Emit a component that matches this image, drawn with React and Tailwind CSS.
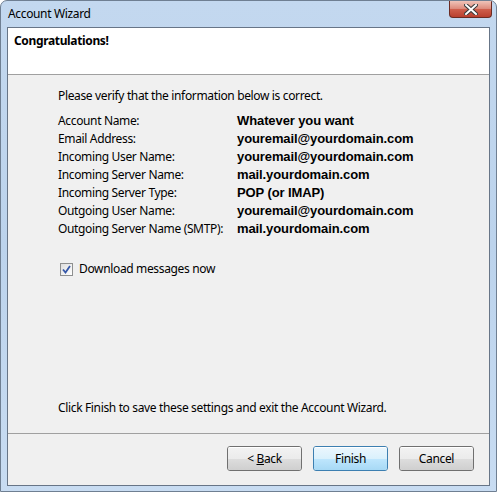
import React from 'react';

const rows = [
  ['Account Name:', 'Whatever you want'],
  ['Email Address:', 'youremail@yourdomain.com'],
  ['Incoming User Name:', 'youremail@yourdomain.com'],
  ['Incoming Server Name:', 'mail.yourdomain.com'],
  ['Incoming Server Type:', 'POP (or IMAP)'],
  ['Outgoing User Name:', 'youremail@yourdomain.com'],
  ['Outgoing Server Name (SMTP):', 'mail.yourdomain.com'],
];

const Button = ({ children, primary }) => (
  <button
    className={
      'relative w-[75px] h-[25px] rounded-[3px] border text-[12px] text-black overflow-hidden ' +
      (primary ? 'border-[#3c7fb1]' : 'border-[#707070]')
    }
  >
    <div className="absolute inset-0 flex flex-col">
      <div className={'flex-1 border-t border-white ' + (primary ? 'bg-gradient-to-b from-[#eaf6fd] to-[#d9f0fc]' : 'bg-gradient-to-b from-[#f2f2f2] to-[#ebebeb]')} />
      <div className={'flex-1 ' + (primary ? 'bg-gradient-to-b from-[#bee6fd] to-[#a7d9f5]' : 'bg-gradient-to-b from-[#dddddd] to-[#cfcfcf]')} />
    </div>
    <span className="relative">{children}</span>
  </button>
);

export default function App() {
  return (
    <div
      className="w-[497px] h-[492px] flex flex-col rounded-t-[7px] border border-[#6f7f92] bg-gradient-to-b from-[#c3d8ef] via-[#bcd3ec] to-[#c8dcf2] overflow-hidden tracking-[-0.35px]"
      style={{ fontFamily: '"Noto Sans", "Open Sans", sans-serif' }}
    >
      {/* Title bar */}
      <div className="h-[26px] flex items-start justify-between shrink-0">
        <div className="pl-[7px] pt-[4px] text-[12px] text-black">Account Wizard</div>
        <div className="relative mr-[4px] w-[43px] h-[17px] rounded-b-[4px] border border-t-0 border-[#6b2b23] bg-gradient-to-b from-[#eab0a2] via-[#d0604d] to-[#b9402f] flex items-center justify-center overflow-hidden">
          <div className="absolute left-0 right-0 top-0 h-[8px] bg-white/25" />
          <svg width="14" height="11" viewBox="0 0 14 11" className="relative">
            <path d="M2 1 L12 10 M12 1 L2 10" stroke="#3b3b3b" strokeWidth="4" strokeLinecap="square" />
            <path d="M2 1 L12 10 M12 1 L2 10" stroke="#ffffff" strokeWidth="2" strokeLinecap="square" />
          </svg>
        </div>
      </div>

      {/* Client area */}
      <div className="flex-1 flex flex-col mx-[6px] mb-[5px] border border-[#677587] bg-[#f0f0f0]">
        <div className="h-[47px] shrink-0 bg-white border-b border-[#a0a0a0] pl-[6px] pt-[4px] text-[12px] font-bold text-black">
          Congratulations!
        </div>

        <div className="flex-1 flex flex-col pl-[50px] pt-[12px] pb-[16px] text-[12px] text-black">
          <div className="leading-[18px]">Please verify that the information below is correct.</div>
          <div className="mt-[7px] flex flex-col">
            {rows.map(([label, value]) => (
              <div key={label} className="flex h-[18px] items-center">
                <div className="w-[179px] shrink-0">{label}</div>
                <div className="text-[13px] font-bold tracking-[-0.1px]" style={{ fontFamily: '"Liberation Sans", Arial, sans-serif' }}>{value}</div>
              </div>
            ))}
          </div>

          <div className="mt-[22px] flex items-center h-[18px]">
            <div className="ml-[2px] w-[13px] h-[13px] border border-[#8e8f8f] bg-gradient-to-br from-[#dedede] to-[#ffffff] flex items-center justify-center">
              <svg width="9" height="9" viewBox="0 0 9 9">
                <path d="M1 4.5 L3.5 7.5 L8 1" fill="none" stroke="#3557a8" strokeWidth="1.8" />
              </svg>
            </div>
            <span className="ml-[6px]">Download messages now</span>
          </div>

          <div className="flex-1" />
          <div className="leading-[18px]">Click Finish to save these settings and exit the Account Wizard.</div>
        </div>

        <div className="h-[52px] shrink-0 border-t border-[#a0a0a0] flex items-start justify-end pt-[12px] pr-[15px] gap-[11px]">
          <Button>
            &lt; <span className="underline">B</span>ack
          </Button>
          <Button primary>Finish</Button>
          <Button>Cancel</Button>
        </div>
      </div>
    </div>
  );
}
